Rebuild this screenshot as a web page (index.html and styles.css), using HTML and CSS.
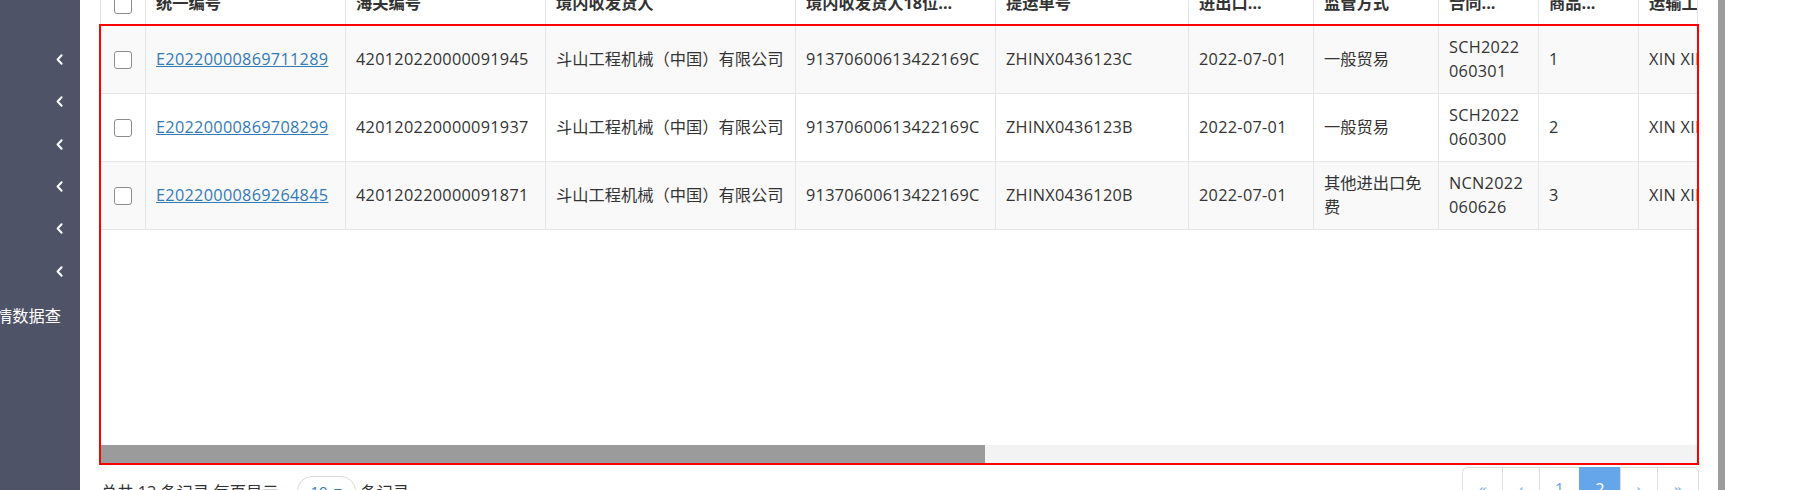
FILE: index.html
```html
<!DOCTYPE html>
<html lang="zh-CN">
<head>
<meta charset="utf-8">
<title>报关单数据查询</title>
<link rel="stylesheet" href="styles.css">
</head>
<body>
<div class="app">
  <aside class="sidebar">
    <ul class="menu">
      <li class="menu-item"><svg class="chev" viewBox="0 0 7 11"><path d="M5.6 1.2 1.6 5.5l4 4.3" fill="none" stroke="#fff" stroke-width="2" stroke-linecap="round" stroke-linejoin="round"/></svg></li>
      <li class="menu-item"><svg class="chev" viewBox="0 0 7 11"><path d="M5.6 1.2 1.6 5.5l4 4.3" fill="none" stroke="#fff" stroke-width="2" stroke-linecap="round" stroke-linejoin="round"/></svg></li>
      <li class="menu-item"><svg class="chev" viewBox="0 0 7 11"><path d="M5.6 1.2 1.6 5.5l4 4.3" fill="none" stroke="#fff" stroke-width="2" stroke-linecap="round" stroke-linejoin="round"/></svg></li>
      <li class="menu-item"><svg class="chev" viewBox="0 0 7 11"><path d="M5.6 1.2 1.6 5.5l4 4.3" fill="none" stroke="#fff" stroke-width="2" stroke-linecap="round" stroke-linejoin="round"/></svg></li>
      <li class="menu-item"><svg class="chev" viewBox="0 0 7 11"><path d="M5.6 1.2 1.6 5.5l4 4.3" fill="none" stroke="#fff" stroke-width="2" stroke-linecap="round" stroke-linejoin="round"/></svg></li>
      <li class="menu-item"><svg class="chev" viewBox="0 0 7 11"><path d="M5.6 1.2 1.6 5.5l4 4.3" fill="none" stroke="#fff" stroke-width="2" stroke-linecap="round" stroke-linejoin="round"/></svg></li>
      <li class="menu-item menu-label"><span>报关单详情数据查</span></li>
    </ul>
  </aside>

  <main class="main">
    <div class="table-wrap">
      <div class="thead grid">
        <div class="th th-check"><span class="cb"></span></div>
        <div class="th">统一编号</div>
        <div class="th">海关编号</div>
        <div class="th">境内收发货人</div>
        <div class="th">境内收发货人18位...</div>
        <div class="th">提运单号</div>
        <div class="th">进出口...</div>
        <div class="th">监管方式</div>
        <div class="th">合同...</div>
        <div class="th">商品...</div>
        <div class="th">运输工具名称</div>
      </div>

      <div class="tbody-box">
        <div class="tbody">
          <div class="tr grid striped">
            <div class="td td-check"><span class="cb"></span></div>
            <div class="td lat"><a href="#">E20220000869711289</a></div>
            <div class="td lat">420120220000091945</div>
            <div class="td">斗山工程机械（中国）有限公司</div>
            <div class="td lat">91370600613422169C</div>
            <div class="td lat">ZHINX0436123C</div>
            <div class="td lat">2022-07-01</div>
            <div class="td wrap">一般贸易</div>
            <div class="td lat">SCH2022<br>060301</div>
            <div class="td lat">1</div>
            <div class="td lat">XIN XIN HAI</div>
          </div>
          <div class="tr grid">
            <div class="td td-check"><span class="cb"></span></div>
            <div class="td lat"><a href="#">E20220000869708299</a></div>
            <div class="td lat">420120220000091937</div>
            <div class="td">斗山工程机械（中国）有限公司</div>
            <div class="td lat">91370600613422169C</div>
            <div class="td lat">ZHINX0436123B</div>
            <div class="td lat">2022-07-01</div>
            <div class="td wrap">一般贸易</div>
            <div class="td lat">SCH2022<br>060300</div>
            <div class="td lat">2</div>
            <div class="td lat">XIN XIN HAI</div>
          </div>
          <div class="tr grid striped">
            <div class="td td-check"><span class="cb"></span></div>
            <div class="td lat"><a href="#">E20220000869264845</a></div>
            <div class="td lat">420120220000091871</div>
            <div class="td">斗山工程机械（中国）有限公司</div>
            <div class="td lat">91370600613422169C</div>
            <div class="td lat">ZHINX0436120B</div>
            <div class="td lat">2022-07-01</div>
            <div class="td wrap">其他进出口免费</div>
            <div class="td lat">NCN2022<br>060626</div>
            <div class="td lat">3</div>
            <div class="td lat">XIN XIN HAI</div>
          </div>
        </div>
        <div class="hscroll"><div class="hthumb"></div></div>
      </div>
    </div>

    <div class="footer">
      <div class="pg-detail">
        <span>总共 13 条记录 每页显示</span>
        <span class="page-size">10 <i class="caret"></i></span>
        <span>条记录</span>
      </div>
      <ul class="pagination">
        <li class="pg-first">«</li>
        <li class="pg-prev">‹</li>
        <li class="pg-num">1</li>
        <li class="pg-num active">2</li>
        <li class="pg-prev">›</li>
        <li class="pg-last">»</li>
      </ul>
    </div>
  </main>

  <div class="vscroll"></div>
  <div class="gutter"></div>
</div>
</body>
</html>
```
FILE: styles.css
```css
* { box-sizing: border-box; }
html, body { margin: 0; padding: 0; }
body {
  width: 1798px;
  height: 490px;
  overflow: hidden;
  background: #fff;
  font-family: "Open Sans", "Noto Sans CJK SC", sans-serif;
  font-size: 16.25px;
  color: #333;
}
.app { display: flex; height: 490px; }

/* sidebar */
.sidebar {
  width: 80px;
  flex: none;
  background: #4e5368;
  overflow: hidden;
}
.menu { list-style: none; margin: 0; padding: 38.5px 0 0; }
.menu-item {
  height: 42.3px;
  display: flex;
  align-items: center;
  justify-content: flex-end;
  padding-right: 17.5px;
}
.chev { width: 7px; height: 11px; display: block; }
.menu-label {
  margin-top: 2px;
  color: #fff;
  white-space: nowrap;
  padding-right: 19px;
}

/* main */
.main { width: 1638px; flex: none; padding: 0 19px; }
.table-wrap { width: 1600px; }
.grid {
  display: grid;
  grid-template-columns: 45px 200px 200px 250px 200px 193px 125px 125px 100px 100px 200px;
}
.thead {
  margin: -20px 1px 0;
  height: 44px;
  border-left: 1px solid #e4e7ea;
  border-right: 1px solid #e4e7ea;
  overflow: hidden;
  background: #fff;
}
.th {
  display: flex;
  align-items: center;
  padding: 0 10px;
  height: 44px;
  border-right: 1px solid #e4e7ea;
  font-weight: bold;
  white-space: nowrap;
  overflow: hidden;
}
.th-check, .td-check { justify-content: center; padding: 0; }
.th-check .cb { margin-top: 6px; }
.cb {
  display: block;
  width: 18px;
  height: 18px;
  border: 1.5px solid #8d8d8d;
  border-radius: 3px;
  background: #fff;
}
.tbody-box { border: 2px solid #ff0000; }
.tbody { height: 419px; overflow: hidden; background: #fff; }
.tr { height: 68px; }
.td {
  display: flex;
  align-items: center;
  padding: 0 10px;
  height: 68px;
  border-right: 1px solid #e4e7ea;
  border-bottom: 1px solid #e4e7ea;
  line-height: 23.5px;
  white-space: nowrap;
  overflow: hidden;
}
.td.lat { letter-spacing: 0.3px; }
.td.wrap { white-space: normal; }
.tr.striped .td { background: #f9f9f9; }
.td a { color: #337ab7; text-decoration: underline; }

.hscroll { height: 18px; background: #f3f3f3; }
.hthumb { width: 884px; height: 18px; background: #9b9b9b; }

/* footer */
.footer {
  width: 1600px;
  display: flex;
  justify-content: space-between;
  align-items: flex-start;
  padding-left: 2px;
}
.pg-detail {
  display: flex;
  align-items: center;
  margin-top: 11px;
  height: 30px;
  white-space: nowrap;
}
.page-size {
  margin: 0 5px 0 18px;
  width: 59px;
  height: 30px;
  border: 1px solid #d9d9d9;
  border-radius: 15px;
  display: flex;
  align-items: center;
  justify-content: center;
  gap: 6px;
  color: #337ab7;
  font-size: 15px;
}
.caret {
  display: block;
  width: 0;
  height: 0;
  border-top: 4px solid #337ab7;
  border-left: 4px solid transparent;
  border-right: 4px solid transparent;
}
.pagination {
  list-style: none;
  margin: 2px 0 0;
  padding: 0;
  display: flex;
}
.pagination li {
  height: 44px;
  border: 1px solid #dddddd;
  margin-left: -1px;
  display: flex;
  justify-content: center;
  padding-top: 9px;
  line-height: 25px;
  color: #6ea6e6;
  background: #fff;
}
.pagination .pg-first { width: 41px; margin-left: 0; border-top-left-radius: 5px; }
.pagination .pg-prev { width: 38px; }
.pagination .pg-num { width: 41px; }
.pagination .pg-num.active { width: 42px; background: #65a5ea; border-color: #65a5ea; color: #fff; }
.pagination .pg-last { width: 42px; border-top-right-radius: 5px; }

.vscroll { width: 7px; flex: none; background: #9c9c9c; }
.gutter { flex: 1; background: #fff; }
```
